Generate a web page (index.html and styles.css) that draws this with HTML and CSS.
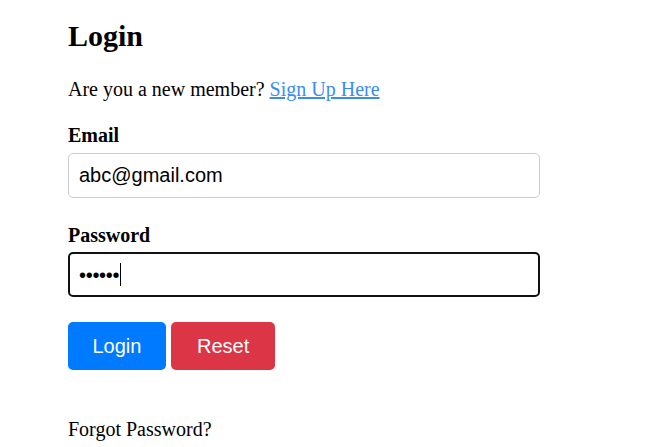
FILE: index.html
```html
<!DOCTYPE html>
<html lang="en">
<head>
<meta charset="utf-8">
<title>Login</title>
<link rel="stylesheet" href="styles.css">
</head>
<body>
<main class="login">
  <h2 class="title">Login</h2>
  <p class="intro">Are you a new member? <a href="#" class="link">Sign Up Here</a></p>
  <form class="form">
    <label class="label" for="email">Email</label>
    <input class="field" id="email" type="text" value="abc@gmail.com">
    <label class="label label-pass">Password</label>
    <div class="field field-focus"><span class="dots">••••••</span><span class="caret"></span></div>
    <div class="actions">
      <button type="button" class="btn btn-login">Login</button>
      <button type="reset" class="btn btn-reset">Reset</button>
    </div>
  </form>
  <p class="forgot">Forgot Password?</p>
</main>
</body>
</html>
```

FILE: styles.css
```css
* { box-sizing: border-box; }
html, body { margin: 0; padding: 0; background: #fff; }
body {
  font-family: "Liberation Serif", "Times New Roman", serif;
  font-size: 20px;
  color: #000;
}
.login {
  width: 472px;
  margin-left: 68px;
  padding-top: 19px;
}
.title {
  margin: 0;
  font-size: 30px;
  font-weight: bold;
  line-height: 34px;
}
.intro {
  margin: 25px 0 0;
  line-height: 23px;
}
.link { color: #3a8cf4; text-decoration: underline; }
.form { display: flex; flex-direction: column; align-items: stretch; }
.label {
  display: block;
  font-weight: bold;
  line-height: 23px;
  margin-top: 23px;
}
.label-pass { margin-top: 26px; }
.field {
  margin-top: 6px;
  width: 472px;
  height: 45px;
  border: 1px solid #cccccc;
  border-radius: 5px;
  padding: 0 10px;
  font-family: "Liberation Sans", Arial, sans-serif;
  font-size: 20px;
  color: #000;
  background: #fff;
  outline: none;
}
.field-focus {
  margin-top: 5px;
  border: 2px solid #111;
  padding: 0 9px;
  display: flex;
  align-items: center;
}
.dots { font-family: "Liberation Sans", Arial, sans-serif; font-size: 20px; letter-spacing: -0.3px; line-height: 1; }
.caret { display: inline-block; width: 1px; height: 23px; background: #000; margin-left: 1px; }
.actions {
  display: flex;
  gap: 5px;
  margin-top: 25px;
}
.btn {
  height: 48px;
  padding: 0 24.5px;
  border: none;
  border-radius: 5px;
  font-family: "Liberation Sans", Arial, sans-serif;
  font-size: 20px;
  color: #fff;
  cursor: pointer;
}
.btn-login { background: #007bff; }
.btn-reset { background: #dc3545; padding: 0 26px; }
.forgot {
  margin: 48px 0 0;
  line-height: 23px;
}
```
